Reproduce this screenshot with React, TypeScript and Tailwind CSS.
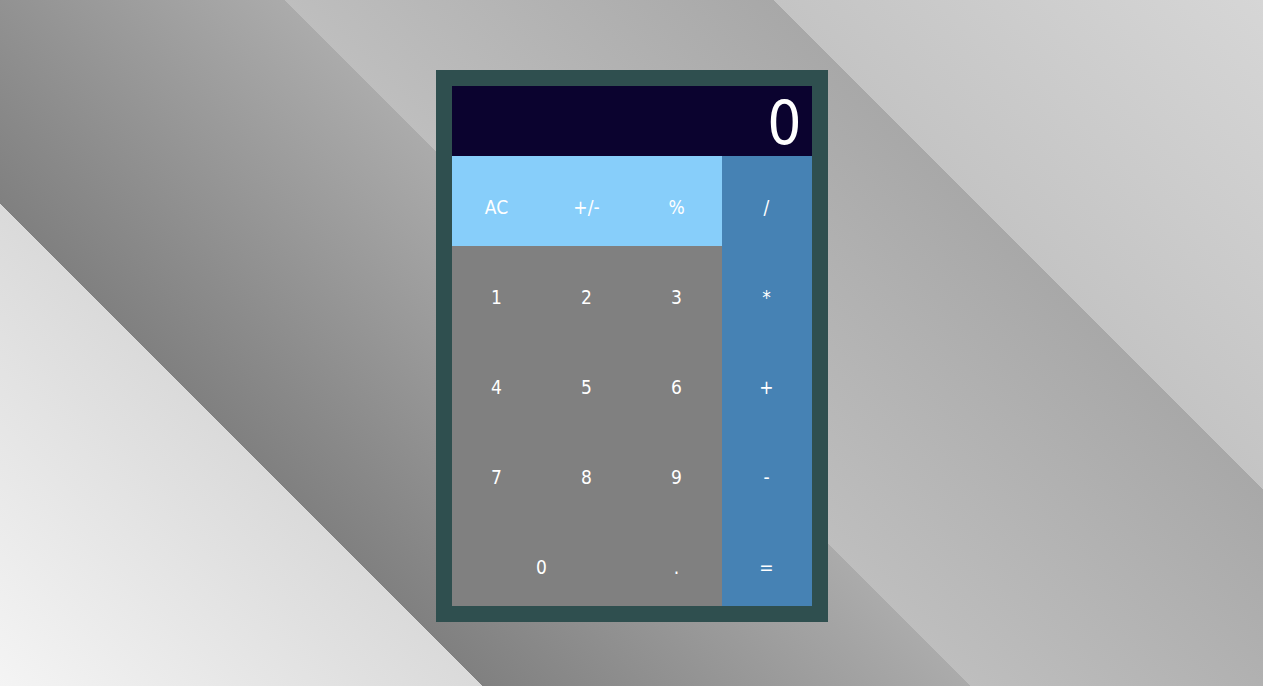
const keys = [
  { label: "AC", tone: "light" },
  { label: "+/-", tone: "light" },
  { label: "%", tone: "light" },
  { label: "/", tone: "op" },
  { label: "1", tone: "num" },
  { label: "2", tone: "num" },
  { label: "3", tone: "num" },
  { label: "*", tone: "op" },
  { label: "4", tone: "num" },
  { label: "5", tone: "num" },
  { label: "6", tone: "num" },
  { label: "+", tone: "op" },
  { label: "7", tone: "num" },
  { label: "8", tone: "num" },
  { label: "9", tone: "num" },
  { label: "-", tone: "op" },
  { label: "0", tone: "num", wide: true },
  { label: ".", tone: "num" },
  { label: "=", tone: "op" },
];

const toneClass: Record<string, string> = {
  light: "bg-[#87cefa]",
  op: "bg-[#4682b4]",
  num: "bg-[#808080]",
};

export default function App() {
  return (
    <div className="h-screen w-full flex justify-center pt-[70px] bg-[linear-gradient(45deg,#f4f4f4_0%,#dadada_24.75%,#808080_24.75%,#ababab_49.8%,#bebebe_49.8%,#a8a8a8_74.9%,#c4c4c4_74.9%,#d6d6d6_100%)] font-['DejaVu_Sans_Condensed','Liberation_Sans_Narrow',sans-serif]">
      <div className="w-[392px] h-[552px] bg-[#2f4f4f] p-4">
        <div className="h-[70px] bg-[#0b032f] flex items-center justify-end pr-[10px] text-white text-[60px] leading-none pt-[4px]">
          0
        </div>
        <div className="grid grid-cols-4">
          {keys.map((k) => (
            <button
              key={k.label}
              className={`h-[90px] flex items-center justify-center pt-[12px] text-white text-[19px] ${toneClass[k.tone]} ${k.wide ? "col-span-2" : ""}`}
            >
              {k.label}
            </button>
          ))}
        </div>
      </div>
    </div>
  );
}
